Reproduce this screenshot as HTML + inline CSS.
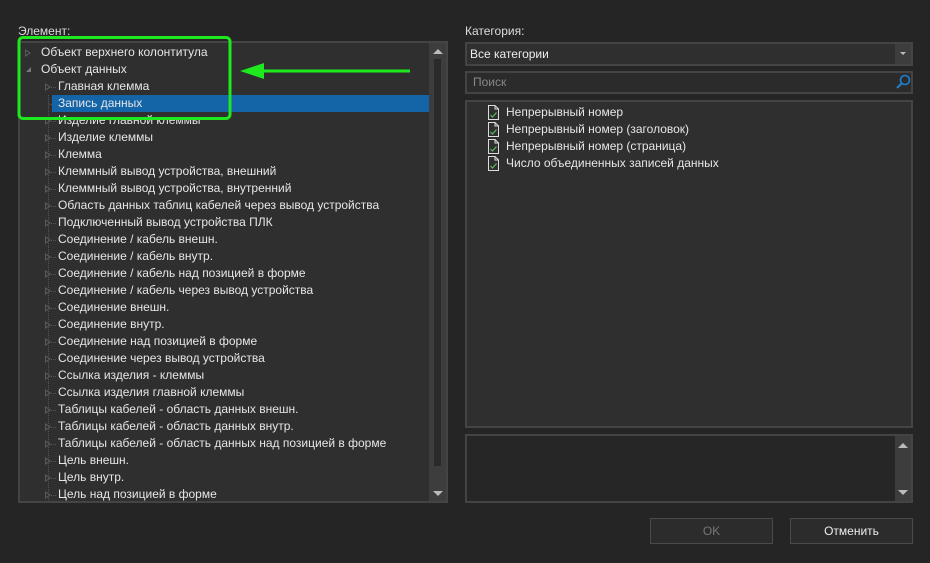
<!DOCTYPE html>
<html><head><meta charset="utf-8"><style>
*{box-sizing:border-box;margin:0;padding:0}
body{width:930px;height:563px;background:#252525;font-family:"Liberation Sans",sans-serif;font-size:12px;color:#e6e6e6;position:relative;overflow:hidden}
.a{position:absolute}
.lbl{color:#dcdcdc}
.box{position:absolute;border:2px solid #444;background:#2f2f2f}
.row{position:absolute;height:17px;line-height:17px;white-space:nowrap}
.tri{position:absolute;width:0;height:0;border-top:4px solid transparent;border-bottom:4px solid transparent;border-left:6px solid #5a5a5a}
.tri:after{content:"";position:absolute;left:-5px;top:-2px;border-top:2px solid transparent;border-bottom:2px solid transparent;border-left:3px solid #2f2f2f}
.dash{position:absolute;width:5px;border-top:1px dotted #555}
.sb{position:absolute;background:#3d3d3d}
.up{position:absolute;border-left:5px solid transparent;border-right:5px solid transparent;border-bottom:5px solid #bbb}
.dn{position:absolute;border-left:5px solid transparent;border-right:5px solid transparent;border-top:5px solid #bbb}
.btn{position:absolute;border:1px solid #4a4a4a;background:#2c2c2c;text-align:center;line-height:24px}
.doc{position:absolute;width:11px;height:15px}
</style></head><body>
<div class="a lbl" style="left:18px;top:24px">Элемент:</div>
<div class="box" style="left:18px;top:41px;width:430px;height:462px;overflow:hidden">
 <div class="a" style="left:32px;top:52px;width:377px;height:17px;background:#1464a8"></div>
 <div class="a" style="left:28px;top:52px;height:405px;border-left:1px dotted #555"></div>
 <div class="tri" style="left:5px;top:6px"></div><div class="row" style="left:21px;top:1px">Объект верхнего колонтитула</div>
 <div class="a" style="left:6px;top:24px;border-left:5px solid transparent;border-bottom:5px solid #777"></div><div class="row" style="left:21px;top:18px">Объект данных</div>
 <div id="rows"></div>
 <div class="sb" style="left:409px;top:0;width:19px;height:460px"></div>
 <div class="a" style="left:414px;top:16px;width:7px;height:407px;background:#2a2a2a"></div>
 <div class="up" style="left:413px;top:6px"></div>
 <div class="dn" style="left:413px;top:448px"></div>
</div>
<div class="a lbl" style="left:465px;top:24px">Категория:</div>
<div class="box" style="left:465px;top:42px;width:448px;height:24px;background:#2f2f2f"><div class="row" style="left:3px;top:2px;color:#eee">Все категории</div><div class="sb" style="left:428px;top:0;width:16px;height:20px"></div><div class="dn" style="left:433px;top:8px;border-width:3px 3px 0;border-top-color:#bbb"></div></div>
<div class="box" style="left:465px;top:71px;width:448px;height:23px;background:#2b2b2b"><div class="row" style="left:6px;top:1px;color:#888">Поиск</div>
<svg class="a" style="left:428px;top:1px" width="16" height="17" viewBox="0 0 16 17"><circle cx="10" cy="6" r="4.5" fill="none" stroke="#1e7fcf" stroke-width="1.6"/><line x1="6.5" y1="9.5" x2="2" y2="14" stroke="#1e7fcf" stroke-width="2"/></svg></div>
<div class="box" style="left:465px;top:100px;width:448px;height:328px;background:#2f2f2f" id="lst"></div>
<div class="box" style="left:465px;top:434px;width:448px;height:69px;background:#262626"><div class="sb" style="left:428px;top:0;width:16px;height:65px"></div><div class="up" style="left:431px;top:7px"></div><div class="dn" style="left:431px;top:54px"></div></div>
<div class="btn" style="left:650px;top:518px;width:123px;height:26px;color:#777">OK</div>
<div class="btn" style="left:790px;top:518px;width:123px;height:26px;color:#eee">Отменить</div>
<svg class="a" style="left:0;top:0" width="930" height="563"><rect x="19" y="37.5" width="211" height="81" rx="4" fill="none" stroke="#1ee81e" stroke-width="3"/><line x1="262" y1="71" x2="410" y2="71" stroke="#1ee81e" stroke-width="3"/><polygon points="240,71 264,63 264,79" fill="#1ee81e"/></svg>
<script>
var t=["Главная клемма","Запись данных","Изделие главной клеммы","Изделие клеммы","Клемма","Клеммный вывод устройства, внешний","Клеммный вывод устройства, внутренний","Область данных таблиц кабелей через вывод устройства","Подключенный вывод устройства ПЛК","Соединение / кабель внешн.","Соединение / кабель внутр.","Соединение / кабель над позицией в форме","Соединение / кабель через вывод устройства","Соединение внешн.","Соединение внутр.","Соединение над позицией в форме","Соединение через вывод устройства","Ссылка изделия - клеммы","Ссылка изделия главной клеммы","Таблицы кабелей - область данных внешн.","Таблицы кабелей - область данных внутр.","Таблицы кабелей - область данных над позицией в форме","Цель внешн.","Цель внутр.","Цель над позицией в форме"];
var h="";t.forEach(function(s,i){var y=35+i*17;if(i!=1)h+='<div class="tri" style="left:25px;top:'+(y+5)+'px"></div>';h+='<div class="dash" style="left:'+(i==1?29:31)+'px;top:'+(y+9)+'px"></div><div class="row" style="left:38px;top:'+y+'px">'+s+'</div>';});
document.getElementById("rows").innerHTML=h;
var l=["Непрерывный номер","Непрерывный номер (заголовок)","Непрерывный номер (страница)","Число объединенных записей данных"];h="";
l.forEach(function(s,i){var y=2+i*17;h+='<svg class="doc" style="left:21px;top:'+(y+1)+'px" viewBox="0 0 11 15"><path d="M0.5 0.5H7L10.5 4V14.5H0.5Z M7 0.5V4H10.5" fill="none" stroke="#ddd"/><path d="M2.5 10L4.5 12L8.5 7.5" fill="none" stroke="#5cb85c" stroke-width="1.2"/></svg><div class="row" style="left:39px;top:'+y+'px">'+s+'</div>';});
document.getElementById("lst").innerHTML=h;
</script>
</body></html>
